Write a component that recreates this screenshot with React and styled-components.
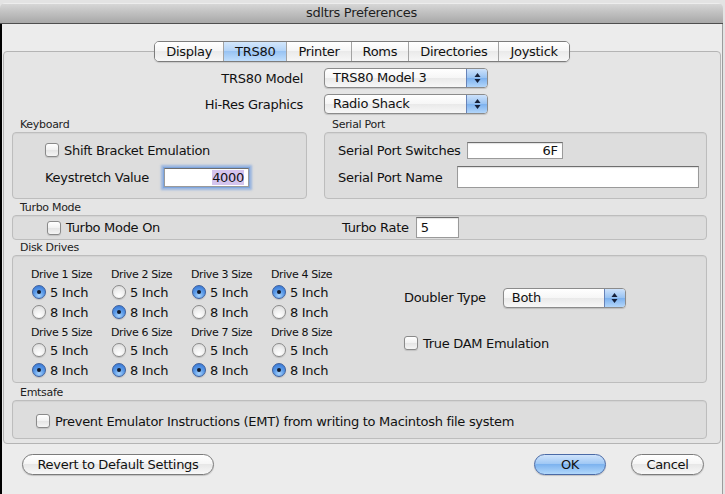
import React from 'react'
import styled, { createGlobalStyle } from 'styled-components'

const GlobalStyle = createGlobalStyle`
  html,
  body {
    margin: 0;
    padding: 0;
  }

  body {
    background: #e3e3e3;
    font-family: 'DejaVu Sans', 'Liberation Sans', sans-serif;
    font-size: 13px;
    letter-spacing: -0.3px;
    color: #111;
  }

  * {
    box-sizing: border-box;
  }
`

const tabs = ['Display', 'TRS80', 'Printer', 'Roms', 'Directories', 'Joystick']

const driveRows = [
  [
    { n: 1, size: 5 },
    { n: 2, size: 8 },
    { n: 3, size: 5 },
    { n: 4, size: 5 },
  ],
  [
    { n: 5, size: 8 },
    { n: 6, size: 8 },
    { n: 7, size: 8 },
    { n: 8, size: 8 },
  ],
]

const PopUp = ({ value, width }) => (
  <StyledPopUp $width={width}>
    <span className="value">{value}</span>
    <span className="arrows">
      <svg width="9" height="12" viewBox="0 0 9 12">
        <path d="M4.5 1 L7.5 5 L1.5 5 Z" fill="#16213a" />
        <path d="M4.5 11 L7.5 7 L1.5 7 Z" fill="#16213a" />
      </svg>
    </span>
  </StyledPopUp>
)

const CheckField = ({ children }) => (
  <CheckRow>
    <CheckBox />
    <span>{children}</span>
  </CheckRow>
)

const Drive = ({ n, size }) => (
  <DriveCell>
    <DriveTitle>Drive {n} Size</DriveTitle>
    {[5, 8].map((inch) => (
      <RadioRow key={inch}>
        <Radio $on={inch === size} />
        <span>{inch} Inch</span>
      </RadioRow>
    ))}
  </DriveCell>
)

const App = () => {
  return (
    <>
      <GlobalStyle />
      <Page>
        <Window>
          <TitleBar>sdltrs Preferences</TitleBar>
          <Body>
            <TabRow>
              <Segmented>
                {tabs.map((tab) => (
                  <Tab key={tab} $active={tab === 'TRS80'}>
                    {tab}
                  </Tab>
                ))}
              </Segmented>
            </TabRow>

            <TabBox>
              <ModelGrid>
                <FormLabel>TRS80 Model</FormLabel>
                <PopUp value="TRS80 Model 3" width={164} />
                <FormLabel>Hi-Res Graphics</FormLabel>
                <PopUp value="Radio Shack" width={164} />
              </ModelGrid>

              <GroupRow>
                <Group $width="295px">
                  <GroupTitle>Keyboard</GroupTitle>
                  <KeyboardBox>
                    <CheckField>Shift Bracket Emulation</CheckField>
                    <FieldRow $gap={15} $height={23}>
                      <span>Keystretch Value</span>
                      <TextField $width={85} $height={19} $align="right" $focused>
                        <Selected>4000</Selected>
                      </TextField>
                    </FieldRow>
                  </KeyboardBox>
                </Group>
                <Group $width="auto" $grow>
                  <GroupTitle>Serial Port</GroupTitle>
                  <SerialBox>
                    <FieldRow $gap={6} $height={17}>
                      <span>Serial Port Switches</span>
                      <TextField $width={96} $height={17} $align="right">
                        6F
                      </TextField>
                    </FieldRow>
                    <FieldRow $gap={15} $height={22}>
                      <span>Serial Port Name</span>
                      <TextField $width={242} $height={22} />
                    </FieldRow>
                  </SerialBox>
                </Group>
              </GroupRow>

              <Group $top={2}>
                <GroupTitle>Turbo Mode</GroupTitle>
                <TurboBox>
                  <CheckField>Turbo Mode On</CheckField>
                  <span>Turbo Rate</span>
                  <TextField $width={43} $height={21}>
                    5
                  </TextField>
                </TurboBox>
              </Group>

              <Group $top={1}>
                <GroupTitle>Disk Drives</GroupTitle>
                <DiskBox>
                  <DriveGrid>
                    {driveRows.flat().map((d) => (
                      <Drive key={d.n} {...d} />
                    ))}
                  </DriveGrid>
                  <DiskOptions>
                    <FieldRow $gap={17} $height={21}>
                      <span>Doubler Type</span>
                      <PopUp value="Both" width={123} />
                    </FieldRow>
                    <CheckField>True DAM Emulation</CheckField>
                  </DiskOptions>
                </DiskBox>
              </Group>

              <Group $top={3}>
                <GroupTitle>Emtsafe</GroupTitle>
                <EmtsafeBox>
                  <CheckField>
                    Prevent Emulator Instructions (EMT) from writing to Macintosh file system
                  </CheckField>
                </EmtsafeBox>
              </Group>
            </TabBox>

            <ButtonBar>
              <PushButton $width={192}>Revert to Default Settings</PushButton>
              <Spacer />
              <PushButton $width={72} $default>
                OK
              </PushButton>
              <PushButton $width={73}>Cancel</PushButton>
            </ButtonBar>
          </Body>
        </Window>
      </Page>
    </>
  )
}

const Page = styled.div`
  width: 725px;
  height: 494px;
  overflow: hidden;
  padding-top: 3px;
  background: #e3e3e3;
`

const Window = styled.div`
  width: 723px;
  height: 491px;
  display: flex;
  flex-direction: column;
  border-radius: 5px 5px 0 0;
  overflow: hidden;
`

const TitleBar = styled.div`
  flex: none;
  height: 21px;
  line-height: 20px;
  text-align: center;
  font-size: 13px;
  color: #1e1e1e;
  background: linear-gradient(#d9d9d9, #c2c2c2 45%, #a8a8a8);
  border-bottom: 1px solid #4e4e4e;
  box-shadow: inset 0 1px 0 #ededed;
`

const Body = styled.div`
  flex: 1;
  display: flex;
  flex-direction: column;
  padding-top: 17px;
  background: #ececec;
  border-left: 2px solid #000;
  border-right: 1px solid #9c9c9c;
`

const TabRow = styled.div`
  display: flex;
  justify-content: center;
  position: relative;
  z-index: 1;
  margin-bottom: -11px;
`

const Segmented = styled.div`
  display: flex;
  height: 21px;
  border: 1px solid #7c7c7c;
  border-radius: 5px;
  overflow: hidden;
  box-shadow: 0 1px 1px rgba(0, 0, 0, 0.12);
`

const Tab = styled.div`
  padding: 0 11px;
  line-height: 19px;
  color: #111;
  background: ${({ $active }) =>
    $active
      ? 'linear-gradient(#d3e7fc, #b1d2f7 50%, #98c3f3 50%, #c0defc)'
      : 'linear-gradient(#ffffff, #f5f5f5 50%, #eaeaea 50%, #f7f7f7)'};

  & + & {
    border-left: 1px solid #a3a3a3;
  }
`

const TabBox = styled.div`
  margin: 0 1px;
  padding: 16px 13px 4px 8px;
  background: #e5e5e5;
  border: 1px solid #b4b4b4;
  border-radius: 4px;
`

const ModelGrid = styled.div`
  display: grid;
  grid-template-columns: 291px 164px;
  grid-auto-rows: 20px;
  column-gap: 21px;
  row-gap: 6px;
  align-items: center;
`

const FormLabel = styled.span`
  text-align: right;
`

const StyledPopUp = styled.div`
  display: flex;
  width: ${({ $width }) => $width}px;
  height: 20px;
  border: 1px solid #8b8b8b;
  border-radius: 4px;
  overflow: hidden;
  background: linear-gradient(#ffffff, #f6f6f6 50%, #e9e9e9 50%, #f7f7f7);
  box-shadow: 0 1px 1px rgba(0, 0, 0, 0.15);

  .value {
    flex: 1;
    padding-left: 8px;
    line-height: 18px;
    white-space: nowrap;
  }

  .arrows {
    width: 21px;
    display: flex;
    align-items: center;
    justify-content: center;
    border-left: 1px solid #6783b8;
    background: linear-gradient(#cde2fb, #98c2f2 50%, #7bb0ee 50%, #b3d6fa);
  }
`

const GroupRow = styled.div`
  display: flex;
  gap: 17px;
  margin-top: 4px;
`

const Group = styled.div`
  display: flex;
  flex-direction: column;
  width: ${({ $width }) => $width || 'auto'};
  flex: ${({ $grow }) => ($grow ? 1 : 'none')};
  margin-top: ${({ $top }) => $top || 0}px;
`

const GroupTitle = styled.div`
  height: 14px;
  line-height: 14px;
  padding-left: 8px;
  font-size: 11px;
  letter-spacing: -0.3px;
  color: #222;
`

const GroupBox = styled.div`
  flex: 1;
  background: #dddddd;
  border: 1px solid #bdbdbd;
  border-radius: 4px;
  box-shadow: inset 0 1px 1px rgba(0, 0, 0, 0.05);
`

const KeyboardBox = styled(GroupBox)`
  display: flex;
  flex-direction: column;
  gap: 7px;
  padding: 8px 0 9px 32px;
`

const SerialBox = styled(GroupBox)`
  display: flex;
  flex-direction: column;
  gap: 7px;
  padding: 9px 0 10px 13px;
`

const TurboBox = styled(GroupBox)`
  display: grid;
  grid-template-columns: 288px auto 43px;
  column-gap: 7px;
  align-items: center;
  justify-content: start;
  padding: 1px 0 1px 34px;
`

const DiskBox = styled(GroupBox)`
  display: grid;
  grid-template-columns: 320px auto;
  column-gap: 53px;
  padding: 12px 0 2px 18px;
`

const EmtsafeBox = styled(GroupBox)`
  display: flex;
  align-items: center;
  padding: 11px 0 8px 23px;
`

const FieldRow = styled.div`
  display: flex;
  align-items: center;
  gap: ${({ $gap }) => $gap}px;
  height: ${({ $height }) => $height}px;
`

const TextField = styled.div`
  width: ${({ $width }) => $width}px;
  height: ${({ $height }) => $height}px;
  line-height: ${({ $height }) => $height - 2}px;
  padding: 0 4px;
  text-align: ${({ $align }) => $align || 'left'};
  background: #fff;
  border: 1px solid #9a9a9a;
  border-top-color: #6e6e6e;
  box-shadow: ${({ $focused }) =>
    $focused
      ? '0 0 0 1px #7fa6de, 0 0 2px 3px rgba(100, 150, 225, 0.55)'
      : 'inset 0 1px 1px rgba(0, 0, 0, 0.12)'};
`

const Selected = styled.span`
  background: #d4c4ee;
`

const CheckRow = styled.div`
  display: flex;
  align-items: center;
  gap: 5px;
  height: 18px;
  white-space: nowrap;
`

const CheckBox = styled.span`
  flex: none;
  width: 14px;
  height: 14px;
  border: 1px solid #8a8a8a;
  border-radius: 3px;
  background: linear-gradient(#ffffff, #f1f1f1 50%, #e4e4e4 50%, #f5f5f5);
  box-shadow: 0 1px 1px rgba(0, 0, 0, 0.12);
`

const DriveGrid = styled.div`
  display: grid;
  grid-template-columns: repeat(4, 80px);
  row-gap: 4px;
`

const DriveCell = styled.div`
  display: flex;
  flex-direction: column;
`

const DriveTitle = styled.div`
  height: 14px;
  line-height: 14px;
  font-size: 11px;
  letter-spacing: -0.4px;
  white-space: nowrap;
`

const RadioRow = styled.div`
  display: flex;
  align-items: center;
  gap: 4px;
  height: 20px;
  padding-left: 1px;
  white-space: nowrap;
`

const Radio = styled.span`
  position: relative;
  flex: none;
  width: 14px;
  height: 14px;
  border-radius: 50%;
  border: 1px solid ${({ $on }) => ($on ? '#3d5f9c' : '#8a8a8a')};
  background: ${({ $on }) =>
    $on
      ? 'radial-gradient(circle at 50% 80%, #a9d3fb 0, #5c9be8 45%, #2f6fd0 100%)'
      : 'radial-gradient(circle at 50% 80%, #ffffff 0, #f0f0f0 45%, #d6d6d6 100%)'};
  box-shadow: 0 1px 1px rgba(0, 0, 0, 0.15);

  &::after {
    content: '';
    display: ${({ $on }) => ($on ? 'block' : 'none')};
    position: absolute;
    left: 4px;
    top: 4px;
    width: 4px;
    height: 4px;
    border-radius: 50%;
    background: #111a2c;
  }
`

const DiskOptions = styled.div`
  display: flex;
  flex-direction: column;
  padding-top: 19px;
  gap: 26px;
`

const ButtonBar = styled.div`
  display: flex;
  align-items: center;
  gap: 25px;
  margin-top: 10px;
  padding: 0 18px 0 20px;
`

const Spacer = styled.div`
  flex: 1;
`

const PushButton = styled.div`
  width: ${({ $width }) => $width}px;
  height: 21px;
  line-height: 19px;
  text-align: center;
  border: 1px solid ${({ $default }) => ($default ? '#4a6aa6' : '#7b7b7b')};
  border-radius: 11px;
  white-space: nowrap;
  background: ${({ $default }) =>
    $default
      ? 'linear-gradient(#cfe3fb, #9cc6f4 50%, #7db3ef 50%, #b2d8fb)'
      : 'linear-gradient(#ffffff, #f5f5f5 50%, #e7e7e7 50%, #f8f8f8)'};
  box-shadow: 0 1px 1px rgba(0, 0, 0, 0.18);
`

export default App
